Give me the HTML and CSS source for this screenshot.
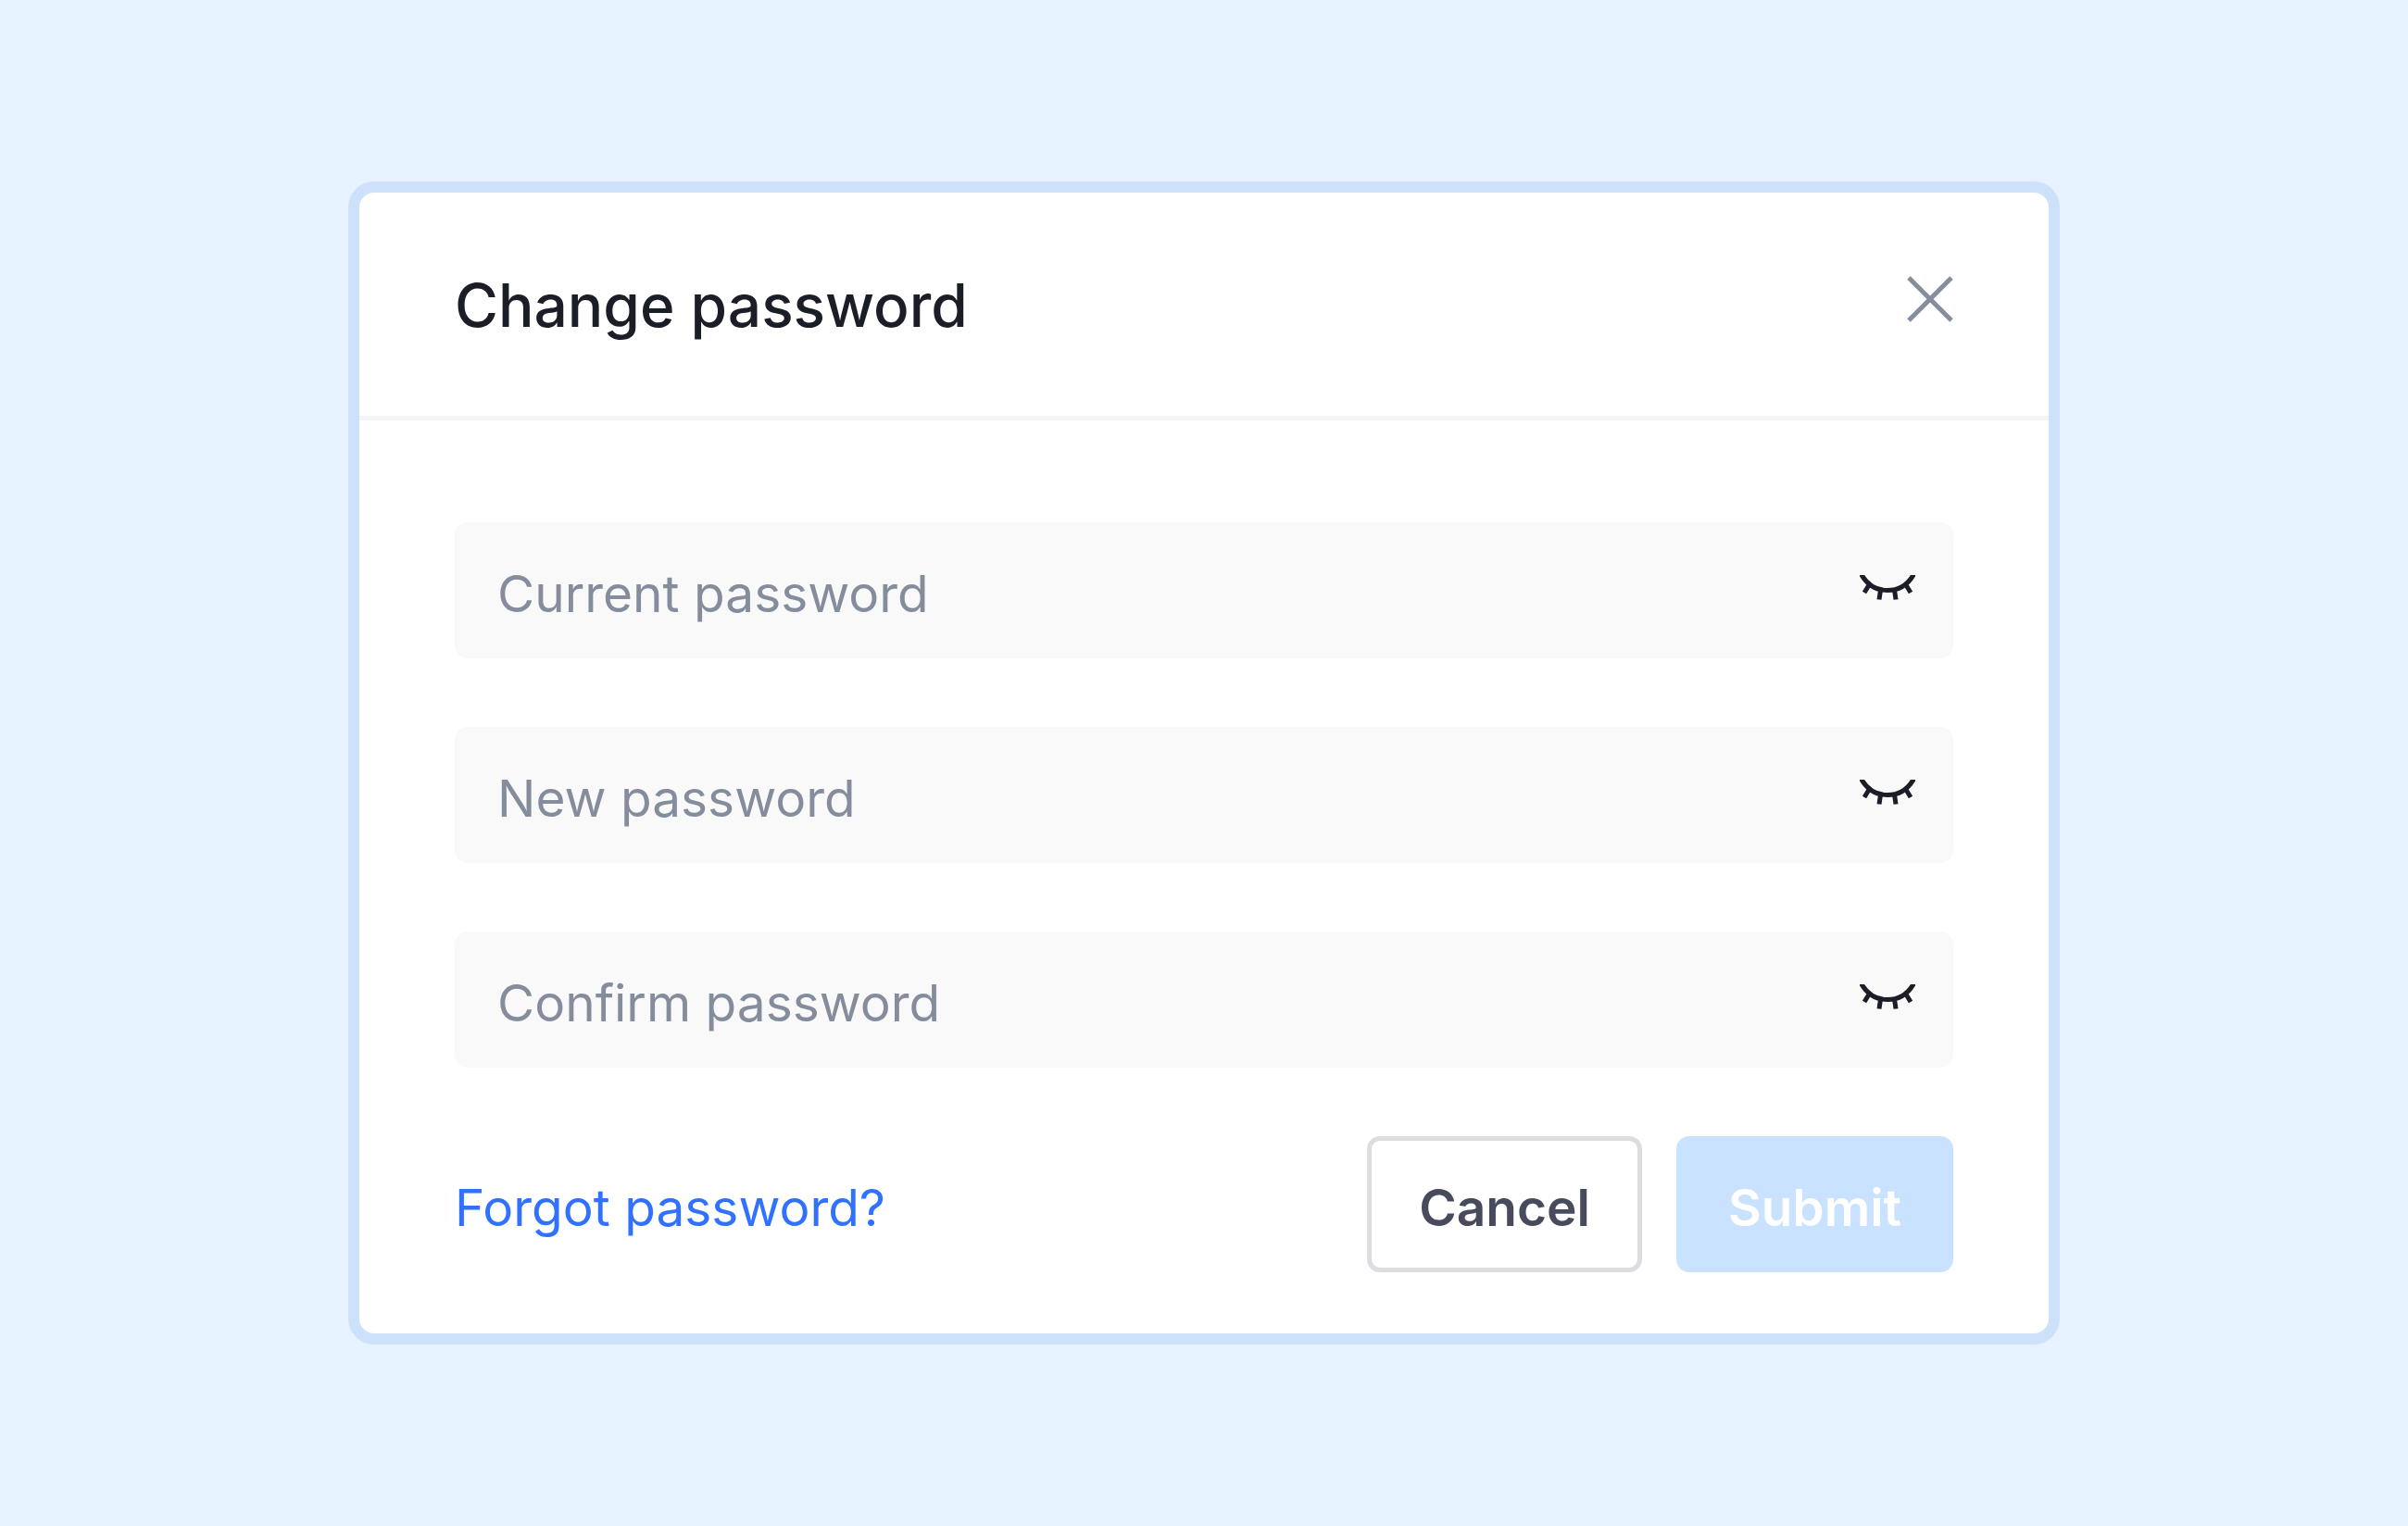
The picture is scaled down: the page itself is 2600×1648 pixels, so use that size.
FILE: index.html
```html
<!DOCTYPE html>
<html lang="en">
<head>
    <meta charset="UTF-8">
    <meta name="viewport" content="width=device-width, initial-scale=1.0">
    <title>Change password</title>
    <link rel="stylesheet" href="styles.css">
</head>
<body>
    <!-- Closed eye icon, shared by the password fields -->
    <svg class="sprite" aria-hidden="true">
        <symbol id="eye-closed" viewBox="0 0 60 33">
            <path d="M1.500 -1C8 10.500 18 16.500 30 16.500S52 10.500 58.500 -1"/>
            <path d="M10.500 10L5 19M22.500 16L21 26.500M37.500 16L39 26.500M49.500 10L55 19"/>
        </symbol>
    </svg>

    <main class="dialog" role="dialog" aria-labelledby="dialogTitle">
        <header class="dialog-header">
            <h1 class="dialog-title" id="dialogTitle">Change password</h1>
            <button class="close-button" type="button" aria-label="Close">
                <svg class="close-icon" viewBox="0 0 50 50">
                    <path d="M2 2L48 48M48 2L2 48"/>
                </svg>
            </button>
        </header>

        <form class="dialog-body">
            <div class="field">
                <input class="field-input" id="currentPassword" type="password" placeholder="Current password" aria-label="Current password">
                <button class="toggle-button" type="button" aria-label="Show current password">
                    <svg class="eye-icon"><use href="#eye-closed"/></svg>
                </button>
            </div>

            <div class="field">
                <input class="field-input" id="newPassword" type="password" placeholder="New password" aria-label="New password">
                <button class="toggle-button" type="button" aria-label="Show new password">
                    <svg class="eye-icon"><use href="#eye-closed"/></svg>
                </button>
            </div>

            <div class="field">
                <input class="field-input" id="confirmPassword" type="password" placeholder="Confirm password" aria-label="Confirm password">
                <button class="toggle-button" type="button" aria-label="Show confirmed password">
                    <svg class="eye-icon"><use href="#eye-closed"/></svg>
                </button>
            </div>

            <div class="actions">
                <a class="forgot-link" href="#">Forgot password?</a>
                <button class="button button-cancel" type="button">Cancel</button>
                <button class="button button-submit" type="submit" disabled>Submit</button>
            </div>
        </form>
    </main>
</body>
</html>
```
FILE: styles.css
```css
* {
    box-sizing: border-box;
}

body {
    margin: 0;
    padding: 40px;
    min-height: 100vh;
    display: flex;
    justify-content: center;
    align-items: center;
    background-color: #e6f2ff;
    font-family: Inter, "Liberation Sans", sans-serif;
    font-size: 55px;
}

button,
input {
    font: inherit;
}

button {
    margin: 0;
    padding: 0;
    border: none;
    background: none;
    cursor: pointer;
}

.sprite {
    position: absolute;
    width: 0;
    height: 0;
}

.dialog {
    width: 100%;
    max-width: 1848px;
    background-color: #fff;
    border: 12px solid #cde1fa;
    border-radius: 28px;
}

/* Header */
.dialog-header {
    display: flex;
    justify-content: space-between;
    align-items: flex-start;
    padding: 82px 103px 79px;
    border-bottom: 5px solid #f5f5f5;
}

.dialog-title {
    margin: 0;
    color: #1b1e27;
    font-size: 64px;
    font-weight: 500;
    line-height: 80px;
}

.close-button {
    padding-top: 8px;
}

.close-icon {
    display: block;
    width: 50px;
    height: 50px;
    fill: none;
    stroke: #858d9d;
    stroke-width: 5;
}

/* Form */
.dialog-body {
    display: flex;
    flex-direction: column;
    gap: 74px;
    padding: 110px 103px 66px;
}

.field {
    display: flex;
    align-items: center;
    height: 147px;
    padding-right: 41px;
    background-color: #f9f9f9;
    border-radius: 14px;
}

.field-input {
    flex: 1;
    min-width: 0;
    height: 100%;
    padding: 6px 46px 0;
    border: none;
    outline: none;
    background: none;
    color: #1b1e27;
}

.field-input::placeholder {
    color: #858d9d;
    opacity: 1;
}

.eye-icon {
    display: block;
    width: 60px;
    height: 33px;
    fill: none;
    stroke: #1b1e27;
    stroke-width: 5;
}

/* Footer */
.actions {
    display: flex;
    align-items: center;
    gap: 37px;
}

.forgot-link {
    margin-right: auto;
    padding-top: 6px;
    color: #3072ff;
    text-decoration: none;
}

.button {
    height: 147px;
    padding: 6px 56px 0;
    border-radius: 14px;
    font-weight: 600;
}

.button-cancel {
    padding: 6px 51px 0;
    border: 5px solid #dcdde1;
    color: #484b5c;
}

.button-submit {
    background-color: #c9e2ff;
    color: #fff;
    cursor: default;
}
```
